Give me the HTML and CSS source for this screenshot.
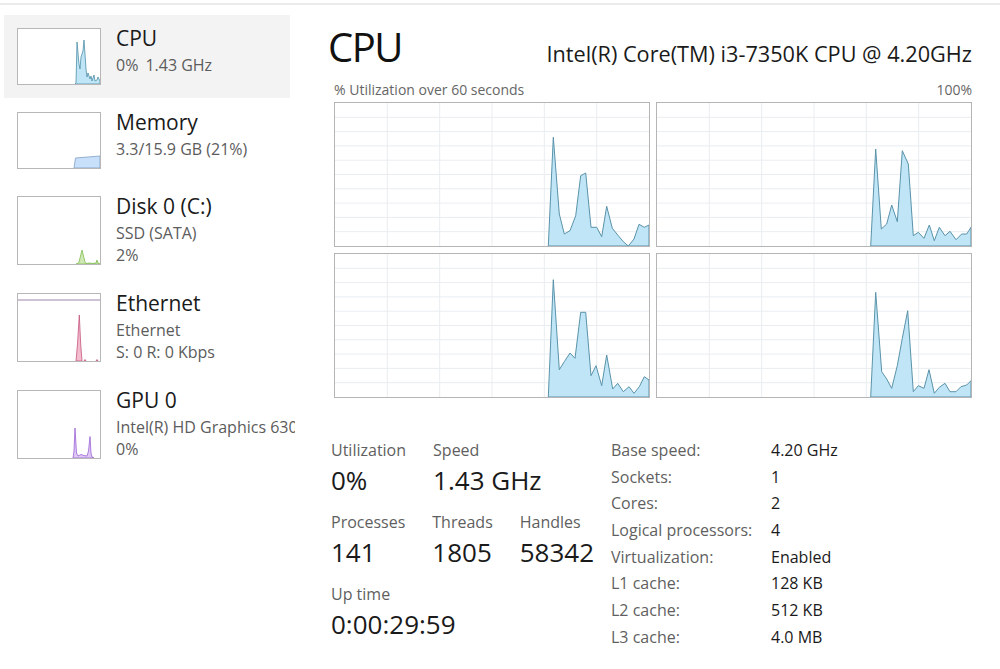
FILE: index.html
```html
<!DOCTYPE html>
<html lang="en">
<head>
<meta charset="utf-8">
<title>Task Manager - CPU</title>
<link rel="stylesheet" href="styles.css">
</head>
<body>
<div class="topline"></div>
<div class="app">
  <nav class="sidebar">
    <div class="item selected">
      <div class="thumb">
        <svg viewBox="0 0 82 55" preserveAspectRatio="none">
          <path class="cpu" d="M57,55 L58,54 L59,13 L61,35 L62,40 L63,28 L65,22 L66,11 L68,40 L69,48 L70,44 L72,50 L73,47 L74,52 L76,46 L77,52 L79,51 L80,48 L82,52 L82,55 Z"/>
        </svg>
      </div>
      <div class="info">
        <div class="title">CPU</div>
        <div class="sub"><span class="gap">0%</span>1.43 GHz</div>
      </div>
    </div>
    <div class="item">
      <div class="thumb">
        <svg viewBox="0 0 82 55" preserveAspectRatio="none">
          <path class="mem" d="M56,55 L57.5,45 L82,43 L82,55 Z"/>
        </svg>
      </div>
      <div class="info">
        <div class="title">Memory</div>
        <div class="sub">3.3/15.9 GB (21%)</div>
      </div>
    </div>
    <div class="item">
      <div class="thumb">
        <svg class="tall" viewBox="0 0 82 67" preserveAspectRatio="none">
          <path class="disk" d="M58,67 L60,66.5 L61,65 L64,53 L67,65 L68,66.5 L72,66 L74,66.5 L78,66 L79,63 L80,66 L82,67 Z"/>
        </svg>
      </div>
      <div class="info">
        <div class="title">Disk 0 (C:)</div>
        <div class="sub first">SSD (SATA)</div>
        <div class="sub">2%</div>
      </div>
    </div>
    <div class="item">
      <div class="thumb">
        <svg class="tall" viewBox="0 0 82 67" preserveAspectRatio="none">
          <line class="eth-top" x1="0" y1="6" x2="82" y2="6"/>
          <path class="eth" d="M58,67 L59.5,50 L61.3,21 L62.7,50 L64,67 Z"/>
          <path class="eth" d="M66,67 L67,65.5 L68,67 Z M78,67 L79,65.5 L80,67 Z"/>
        </svg>
      </div>
      <div class="info">
        <div class="title">Ethernet</div>
        <div class="sub first">Ethernet</div>
        <div class="sub">S: 0 R: 0 Kbps</div>
      </div>
    </div>
    <div class="item">
      <div class="thumb">
        <svg class="tall" viewBox="0 0 82 67" preserveAspectRatio="none">
          <path class="gpu" d="M55,67 L56,60 L57,37 L58.5,62 L60,65 L63,63.5 L66,64.5 L69,65 L70.5,60 L72,45.5 L73,62 L74,66 L76,67 Z"/>
        </svg>
      </div>
      <div class="info">
        <div class="title">GPU 0</div>
        <div class="sub first">Intel(R) HD Graphics 630</div>
        <div class="sub">0%</div>
      </div>
    </div>
  </nav>

  <main class="main">
    <header class="heading">
      <h1>CPU</h1>
      <div class="model">Intel(R) Core(TM) i3-7350K CPU @ 4.20GHz</div>
    </header>
    <div class="graph-label">
      <span>% Utilization over 60 seconds</span>
      <span>100%</span>
    </div>
    <div class="graphs">
      <div class="graph">
        <svg viewBox="0 0 314 143" preserveAspectRatio="none">
          <g class="grid">
            <path d="M52.3,0V143M104.7,0V143M157,0V143M209.3,0V143M261.7,0V143M0,14.3H314M0,28.6H314M0,42.9H314M0,57.2H314M0,71.5H314M0,85.8H314M0,100.1H314M0,114.4H314M0,128.7H314"/>
          </g>
          <path class="load" d="M213.3,143 L218.3,34.3 L224.3,111 L229.3,131 L235,127.7 L240.7,112.7 L245.7,72.7 L250.7,70 L256,124.3 L261.7,124.3 L266.7,133.7 L271.7,103.3 L277.3,125.3 L283.3,132.7 L288.3,138.7 L293.3,143 L299,136 L304,121.3 L309.3,124.3 L314,122 L314,143 Z"/>
        </svg>
      </div>
      <div class="graph">
        <svg viewBox="0 0 314 143" preserveAspectRatio="none">
          <g class="grid">
            <path d="M52.3,0V143M104.7,0V143M157,0V143M209.3,0V143M261.7,0V143M0,14.3H314M0,28.6H314M0,42.9H314M0,57.2H314M0,71.5H314M0,85.8H314M0,100.1H314M0,114.4H314M0,128.7H314"/>
          </g>
          <path class="load" d="M213.7,143 L218.7,46 L224.3,126 L229.7,121 L234.7,102 L240.3,118.7 L245.3,47.7 L251.3,61 L256.3,132.7 L261.3,129.3 L267,135.3 L272.3,122 L277.3,137.7 L282.3,124.3 L288,132.7 L293,128.3 L299,136.7 L304.7,131 L309.7,131 L314,124.3 L314,143 Z"/>
        </svg>
      </div>
      <div class="graph">
        <svg viewBox="0 0 314 143" preserveAspectRatio="none">
          <g class="grid">
            <path d="M52.3,0V143M104.7,0V143M157,0V143M209.3,0V143M261.7,0V143M0,14.3H314M0,28.6H314M0,42.9H314M0,57.2H314M0,71.5H314M0,85.8H314M0,100.1H314M0,114.4H314M0,128.7H314"/>
          </g>
          <path class="load" d="M213.3,143 L218.3,25.7 L224.3,115.7 L229.3,107.7 L235,99 L240,104.3 L245.7,58.3 L250.7,58.3 L256,121.7 L261,111.7 L266.7,131.7 L271.7,101 L277.7,135 L282.7,129.3 L288.3,137.7 L294,132.7 L299,139.3 L304.3,132.7 L309.3,122.7 L314,126 L314,143 Z"/>
        </svg>
      </div>
      <div class="graph">
        <svg viewBox="0 0 314 143" preserveAspectRatio="none">
          <g class="grid">
            <path d="M52.3,0V143M104.7,0V143M157,0V143M209.3,0V143M261.7,0V143M0,14.3H314M0,28.6H314M0,42.9H314M0,57.2H314M0,71.5H314M0,85.8H314M0,100.1H314M0,114.4H314M0,128.7H314"/>
          </g>
          <path class="load" d="M213.7,143 L218.7,38.3 L224.7,117.7 L229.7,125 L234.7,134.3 L240.3,111.7 L245.3,84.3 L250.7,56.7 L256.3,137.7 L261.3,131.7 L267,134.3 L272,115.7 L277.3,139.3 L282.3,133.3 L288,129.3 L293,137.7 L299,137.7 L304,132.7 L309.7,131 L314,126.7 L314,143 Z"/>
        </svg>
      </div>
    </div>

    <section class="stats">
      <div class="live">
        <div class="stat-row">
          <div class="stat"><div class="label">Utilization</div><div class="value">0%</div></div>
          <div class="stat"><div class="label">Speed</div><div class="value">1.43 GHz</div></div>
        </div>
        <div class="stat-row">
          <div class="stat"><div class="label">Processes</div><div class="value">141</div></div>
          <div class="stat"><div class="label">Threads</div><div class="value">1805</div></div>
          <div class="stat"><div class="label">Handles</div><div class="value">58342</div></div>
        </div>
        <div class="stat-row">
          <div class="stat"><div class="label">Up time</div><div class="value">0:00:29:59</div></div>
        </div>
      </div>
      <div class="specs">
        <div class="k">Base speed:</div><div class="v">4.20 GHz</div>
        <div class="k">Sockets:</div><div class="v">1</div>
        <div class="k">Cores:</div><div class="v">2</div>
        <div class="k">Logical processors:</div><div class="v">4</div>
        <div class="k">Virtualization:</div><div class="v">Enabled</div>
        <div class="k">L1 cache:</div><div class="v">128 KB</div>
        <div class="k">L2 cache:</div><div class="v">512 KB</div>
        <div class="k">L3 cache:</div><div class="v">4.0 MB</div>
      </div>
    </section>
  </main>
</div>
</body>
</html>
```

FILE: styles.css
```css
* { box-sizing: border-box; margin: 0; padding: 0; }

html, body {
  width: 1000px;
  height: 669px;
  overflow: hidden;
  background: #ffffff;
}

body {
  font-family: "Open Sans", "Noto Sans", sans-serif;
  color: #1a1a1a;
}

.topline {
  height: 2px;
  margin-top: 3px;
  background: #ebebeb;
}

.app {
  display: flex;
}

/* ---------- sidebar ---------- */
.sidebar {
  width: 295px;
  flex: none;
  overflow: hidden;
  padding: 10px 0 0 4px;
}

.item {
  width: 286px;
  display: flex;
  align-items: flex-start;
  gap: 15px;
  padding: 13px;
  margin-bottom: 1px;
}

.item.selected {
  background: #f3f3f3;
}

.thumb {
  flex: none;
  width: 84px;
  border: 1px solid #b7b7b7;
  background: #ffffff;
}

.thumb svg {
  display: block;
  width: 82px;
  height: 55px;
}

.thumb svg.tall {
  height: 67px;
}

.info {
  flex: none;
  white-space: nowrap;
}

.title {
  font-size: 21px;
  line-height: 20px;
  color: #1a1a1a;
}

.sub {
  font-size: 16px;
  line-height: 22px;
  color: #5c5c5c;
}

.title + .sub {
  margin-top: 6px;
}

.sub .gap {
  margin-right: 7px;
}

.cpu  { fill: #bfe5f6; stroke: #4f8fa8; stroke-width: 0.8; }
.mem  { fill: #c9e0fb; stroke: #7f9fc4; stroke-width: 0.8; }
.disk { fill: #cfe9b4; stroke: #7dbb4f; stroke-width: 0.8; }
.eth  { fill: #f4bccf; stroke: #c4567e; stroke-width: 0.8; }
.eth-top { stroke: #a184aa; stroke-width: 1; }
.gpu  { fill: #ddc8f5; stroke: #9a62d6; stroke-width: 0.8; }

/* ---------- main ---------- */
.main {
  flex: 1;
  margin-left: 36px;
  padding: 18px 28px 0 0;
}

.heading {
  display: flex;
  justify-content: space-between;
  align-items: baseline;
}

.heading h1 {
  font-size: 40px;
  line-height: 48px;
  font-weight: 400;
  letter-spacing: -1.5px;
  margin-left: -3px;
  color: #111111;
}

.model {
  font-size: 21.7px;
  color: #1a1a1a;
}

.graph-label {
  display: flex;
  justify-content: space-between;
  margin: 10px 0 0 3px;
  font-size: 14px;
  line-height: 18px;
  color: #666666;
}

.graphs {
  display: grid;
  grid-template-columns: 316px 316px;
  grid-auto-rows: 145px;
  gap: 6px;
  margin: 3px 0 0 3px;
}

.graph {
  border: 1px solid #b5b5b5;
  background: #ffffff;
}

.graph svg {
  display: block;
  width: 314px;
  height: 143px;
}

.grid path {
  stroke: #e9edf1;
  stroke-width: 1;
  fill: none;
}

.load {
  fill: #bfe5f6;
  stroke: #5a93aa;
  stroke-width: 1;
  stroke-linejoin: round;
}

/* ---------- stats ---------- */
.stats {
  display: flex;
  margin-top: 40px;
}

.live {
  width: 280px;
  flex: none;
}

.stat-row {
  display: flex;
  gap: 27px;
  margin-bottom: 12px;
}

.stat .label {
  font-size: 16px;
  line-height: 24px;
  color: #5f5f5f;
}

.stat .value {
  font-size: 26px;
  line-height: 36px;
  color: #1a1a1a;
}

.specs {
  display: grid;
  grid-template-columns: 160px auto;
  grid-auto-rows: 26.7px;
  font-size: 16px;
  line-height: 26.7px;
  margin-top: -1px;
}

.specs .k {
  color: #5f5f5f;
}

.specs .v {
  color: #1a1a1a;
}
```
